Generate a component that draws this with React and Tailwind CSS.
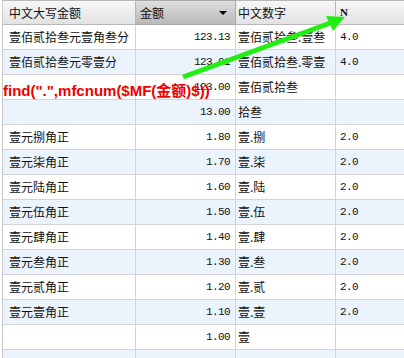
const rows = [
  ["壹佰贰拾叁元壹角叁分", "123.13", "壹佰贰拾叁.壹叁", "4.0"],
  ["壹佰贰拾叁元零壹分", "123.01", "壹佰贰拾叁.零壹", "4.0"],
  ["", "123.00", "壹佰贰拾叁", ""],
  ["", "13.00", "拾叁", ""],
  ["壹元捌角正", "1.80", "壹.捌", "2.0"],
  ["壹元柒角正", "1.70", "壹.柒", "2.0"],
  ["壹元陆角正", "1.60", "壹.陆", "2.0"],
  ["壹元伍角正", "1.50", "壹.伍", "2.0"],
  ["壹元肆角正", "1.40", "壹.肆", "2.0"],
  ["壹元叁角正", "1.30", "壹.叁", "2.0"],
  ["壹元贰角正", "1.20", "壹.贰", "2.0"],
  ["壹元壹角正", "1.10", "壹.壹", "2.0"],
  ["", "1.00", "壹", ""],
  ["", "", "", ""],
];

const cjk = "font-['SimSun','Noto_Sans_CJK_SC',sans-serif]";
const mono = "font-['Liberation_Mono','Noto_Sans_CJK_SC',monospace] tracking-[-0.6px]";

function Cell({ children, className }) {
  return (
    <div className={"h-[25px] border-r border-b border-[#d4d4d4] flex items-center overflow-hidden whitespace-nowrap " + className}>
      {children}
    </div>
  );
}

export default function App() {
  return (
    <div className="relative w-[404px] h-[358px] overflow-hidden bg-white text-[#111]">
      <div className="grid grid-cols-[133px_100px_100px_1fr] ml-[2px] border-l border-[#c8c8c8]">
        {/* header */}
        <div className={"h-[25px] border-r border-b border-t border-[#b8b8b8] bg-gradient-to-b from-[#f7f7f7] to-[#e2e2e2] flex items-center pl-[6px] text-[12px] " + cjk}>中文大写金额</div>
        <div className={"h-[25px] border-r border-b border-t border-[#a8a8a8] bg-gradient-to-b from-[#dedede] to-[#b9b9b9] flex items-center justify-between pl-[4px] pr-[8px] text-[12px] " + cjk}>
          <span>金额</span>
          <span className="w-0 h-0 border-l-[4px] border-r-[4px] border-t-[4px] border-l-transparent border-r-transparent border-t-black" />
        </div>
        <div className={"h-[25px] border-r border-b border-t border-[#b8b8b8] bg-gradient-to-b from-[#f7f7f7] to-[#e2e2e2] flex items-center pl-[2px] text-[12px] " + cjk}>中文数字</div>
        <div className="h-[25px] border-b border-t border-[#b8b8b8] bg-gradient-to-b from-[#f7f7f7] to-[#e2e2e2] flex items-center pl-[4px] text-[11px] font-bold font-['Liberation_Serif',serif]">N</div>

        {rows.map((r, i) => {
          const bg = i % 2 === 1 ? "bg-[#ebf3fd]" : "bg-white";
          return [
            <Cell key={i + "a"} className={bg + " pl-[6px] text-[12px] " + cjk}>{r[0]}</Cell>,
            <Cell key={i + "b"} className={bg + " justify-end pr-[5px] text-[11px] " + mono}>{r[1]}</Cell>,
            <Cell key={i + "c"} className={bg + " pl-[2px] text-[12px] " + cjk}>{r[2]}</Cell>,
            <Cell key={i + "d"} className={bg + " pl-[4px] text-[11px] border-r-0 " + mono}>{r[3]}</Cell>,
          ];
        })}
      </div>

      {/* annotation overlay */}
      <div className="absolute left-[3px] top-[80px] text-[15px] font-bold text-[#f00000] font-['Liberation_Sans','Noto_Sans_CJK_SC',sans-serif] whitespace-nowrap">
        find(".",mfcnum($MF(金额)$))
      </div>
      <svg className="absolute left-0 top-0" width="404" height="358">
        <line x1="183" y1="77" x2="333" y2="22" stroke="#22ee11" strokeWidth="5" />
        <polygon points="345,17 326,16 333,31" fill="#22ee11" />
      </svg>
    </div>
  );
}
